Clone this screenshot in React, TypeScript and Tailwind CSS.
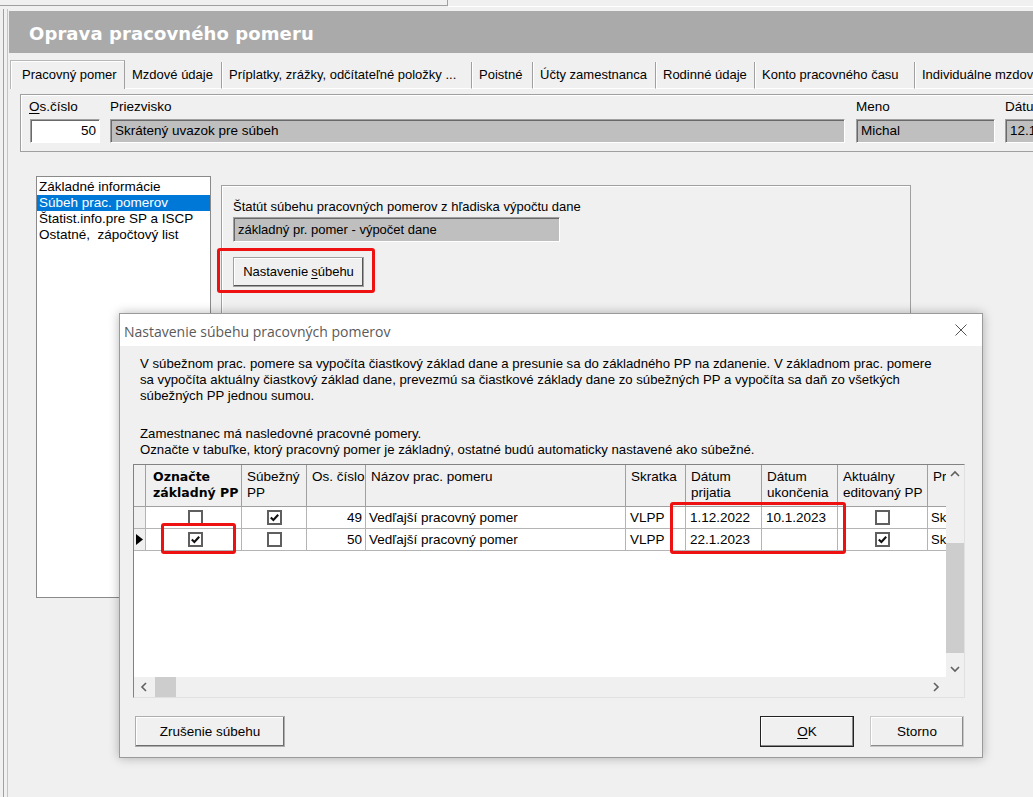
import React from "react";

const F = "font-['Liberation_Sans',Arial,sans-serif]";

function Chk({ on }: { on?: boolean }) {
  return (
    <span className="inline-flex w-[15px] h-[15px] border-2 border-[#5f5f5f] bg-white items-center justify-center">
      {on && (
        <svg width="11" height="11" viewBox="0 0 11 11">
          <path d="M1.8 5.4 L4.4 8 L9.2 2.8" stroke="#111" strokeWidth="2.1" fill="none" />
        </svg>
      )}
    </span>
  );
}

function Chev({ dir }: { dir: "up" | "down" | "left" | "right" }) {
  const d =
    dir === "up"
      ? "M1 6 L5 2 L9 6"
      : dir === "down"
      ? "M1 2 L5 6 L9 2"
      : dir === "left"
      ? "M6 1 L2 5 L6 9"
      : "M2 1 L6 5 L2 9";
  const w = dir === "up" || dir === "down" ? 10 : 8;
  const h = dir === "up" || dir === "down" ? 8 : 10;
  return (
    <svg width={w} height={h} viewBox={`0 0 ${w} ${h}`}>
      <path d={d} stroke="#606060" strokeWidth="1.6" fill="none" />
    </svg>
  );
}

const cols =
  "grid grid-cols-[12px_96px_65px_59px_260px_60px_76px_76px_90px_18px]";
const hc = "border-r border-b border-[#a0a0a0] pt-[4px] pl-[5px] leading-[16px] overflow-hidden whitespace-nowrap";
const dc = "border-r border-b border-[#b4b4b4] h-[22px] flex items-center overflow-hidden whitespace-nowrap bg-white";
const sunken =
  "border-t border-l border-[#a0a0a0] border-b border-r border-b-white border-r-white shadow-[inset_1px_1px_#696969]";

const tabs: [string, number][] = [
  ["Mzdové údaje", 97],
  ["Príplatky, zrážky, odčítateľné položky ...", 250],
  ["Poistné", 61],
  ["Účty zamestnanca", 123],
  ["Rodinné údaje", 99],
  ["Konto pracovného času", 160],
  ["Individuálne mzdové údaje", 200],
];

type Row = {
  ind: boolean;
  zak: boolean;
  sub: boolean;
  os: string;
  naz: string;
  sk: string;
  od: string;
  dokedy: string;
  akt: boolean;
};

const rows: Row[] = [
  { ind: false, zak: false, sub: true, os: "49", naz: "Vedľajší pracovný pomer", sk: "VLPP", od: "1.12.2022", dokedy: "10.1.2023", akt: false },
  { ind: true, zak: true, sub: false, os: "50", naz: "Vedľajší pracovný pomer", sk: "VLPP", od: "22.1.2023", dokedy: "", akt: true },
];

export default function App() {
  return (
    <div className={`relative w-[1033px] h-[797px] overflow-hidden bg-[#f0f0f0] text-black ${F}`}>
      {/* top strip */}
      <div className="flex h-[9px]">
        <div className="w-[448px] h-[6px] border-b border-r border-[#a0a0a0]" />
        <div className="flex-1 h-[7px] border-b border-white" />
      </div>

      <div className="flex h-[788px]">
        <div className="w-[3px] shrink-0" />
        <div className="w-[4px] shrink-0 border-l border-[#a0a0a0]" />
        <div className="w-[2px] shrink-0 border-l border-[#c4c4c4]" />
        <div className="flex-1 flex flex-col min-w-0 overflow-hidden">
          {/* title bar */}
          <div className="mt-[2px] h-[42px] bg-[#aaaaaa] flex items-center pl-[20px] pt-[2px] shrink-0">
            <span className="font-['DejaVu_Sans',Verdana,sans-serif] font-bold text-[18px] text-white tracking-[0.1px]">
              Oprava pracovného pomeru
            </span>
          </div>

          {/* tabs */}
          <div className="mt-[7px] h-[29px] flex items-end text-[13px] ml-[1px] overflow-hidden shrink-0">
            <div className="w-[115px] shrink-0 h-[29px] border-t border-l border-[#b8b8b8] shadow-[inset_1px_1px_#fff] border-r border-r-[#a0a0a0] pl-[11px] flex items-center whitespace-nowrap">
              Pracovný pomer
            </div>
            {tabs.map(([t, w]) => (
              <div
                key={t}
                style={{ width: w }}
                className="shrink-0 h-[27px] border-r border-[#a0a0a0] border-b border-b-white shadow-[1px_0_#fff] pl-[7px] flex items-center whitespace-nowrap overflow-hidden"
              >
                {t}
              </div>
            ))}
          </div>

          {/* header group */}
          <div className="mt-[5px] ml-[11px] w-[1100px] h-[58px] border border-[#a0a0a0] shadow-[inset_1px_1px_#fff] pl-[9px] pt-[4px] flex text-[13.5px] shrink-0">
            <div className="w-[70px] shrink-0">
              <div className="h-[16px] leading-[16px] -ml-[1px]">
                <span className="underline underline-offset-2">O</span>s.číslo
              </div>
              <div className={`mt-[4px] h-[24px] bg-white ${sunken} flex items-center justify-end pr-[3px]`}>
                50
              </div>
            </div>
            <div className="w-[735px] ml-[10px] shrink-0">
              <div className="h-[16px] leading-[16px]">Priezvisko</div>
              <div className={`mt-[4px] h-[24px] bg-[#bfbfbf] ${sunken} flex items-center pl-[4px]`}>
                Skrátený uvazok pre súbeh
              </div>
            </div>
            <div className="w-[139px] ml-[11px] shrink-0">
              <div className="h-[16px] leading-[16px]">Meno</div>
              <div className={`mt-[4px] h-[24px] bg-[#bfbfbf] ${sunken} flex items-center pl-[4px]`}>
                Michal
              </div>
            </div>
            <div className="w-[100px] ml-[10px] shrink-0">
              <div className="h-[16px] leading-[16px]">Dátum</div>
              <div className={`mt-[4px] h-[24px] bg-[#bfbfbf] ${sunken} flex items-center pl-[4px]`}>
                12.1.2023
              </div>
            </div>
          </div>

          {/* lower area */}
          <div className="mt-[24px] ml-[27px] flex items-start">
            <div className="w-[175px] shrink-0 h-[422px] bg-white border border-[#8a8a8a] text-[13.5px] leading-[16px] pt-[2px]">
              <div className="pl-[2px] h-[16px]">Základné informácie</div>
              <div className="pl-[2px] h-[16px] bg-[#0078d7] text-white">Súbeh prac. pomerov</div>
              <div className="pl-[2px] h-[16px]">Štatist.info.pre SP a ISCP</div>
              <div className="pl-[2px] h-[16px] whitespace-pre">Ostatné,  zápočtový list</div>
            </div>
            <div className="ml-[10px] mt-[9px] w-[690px] shrink-0 h-[415px] border border-[#a0a0a0] shadow-[inset_1px_1px_#fff] pl-[11px] pt-[13px] text-[13px]">
              <div className="h-[16px] leading-[16px]">
                Štatút súbehu pracovných pomerov z hľadiska výpočtu dane
              </div>
              <div className={`mt-[2px] w-[327px] h-[25px] bg-[#bfbfbf] ${sunken} flex items-center pl-[4px]`}>
                základný pr. pomer - výpočet dane
              </div>
              <button className="mt-[15px] w-[131px] h-[30px] bg-[#f0f0f0] border border-[#a0a0a0] shadow-[inset_-1px_-1px_#555,inset_1px_1px_#fff] text-[13px] flex items-center justify-center">
                Nastavenie <span className="underline underline-offset-2 ml-[3px]">s</span>úbehu
              </button>
            </div>
          </div>
        </div>
      </div>

      {/* dialog */}
      <div className="absolute left-[119px] top-[313px] w-[864px] h-[445px] bg-[#f0f0f0] border border-[#9a9a9a] shadow-[0_0_10px_rgba(0,0,0,0.28)] flex flex-col">
        <div className="h-[32px] bg-white flex items-center justify-between pl-[4px] pr-[15px]">
          <span className="font-['Open_Sans','Noto_Sans',sans-serif] text-[14px] text-[#5a5a5a] pt-[2px]">
            Nastavenie súbehu pracovných pomerov
          </span>
          <svg width="12" height="12" viewBox="0 0 12 12">
            <path d="M0.5 0.5 L11.5 11.5 M11.5 0.5 L0.5 11.5" stroke="#555" strokeWidth="1" />
          </svg>
        </div>
        <div className="pl-[13px] flex flex-col text-[13.2px] leading-[16px]">
          <div className="mt-[10px] pl-[7px] whitespace-nowrap">
            V súbežnom prac. pomere sa vypočíta čiastkový základ dane a presunie sa do základného PP na zdanenie. V základnom prac. pomere
            <br />
            sa vypočíta aktuálny čiastkový základ dane, prevezmú sa čiastkové základy dane zo súbežných PP a vypočíta sa daň zo všetkých
            <br />
            súbežných PP jednou sumou.
          </div>
          <div className="mt-[22px] pl-[7px] whitespace-nowrap">
            Zamestnanec má nasledovné pracovné pomery.
            <br />
            Označte v tabuľke, ktorý pracovný pomer je základný, ostatné budú automaticky nastavené ako súbežné.
          </div>

          {/* grid */}
          <div className="mt-[6px] w-[832px] h-[234px] border border-[#828282] border-b-[#e0e0e0] border-r-[#e0e0e0] flex flex-col text-[13.5px]">
            <div className="flex h-[212px]">
              <div className="w-[812px] bg-white flex flex-col">
                <div className={`${cols} h-[42px] bg-[#f0f0f0]`}>
                  <div className="border-r border-b border-[#a0a0a0]" />
                  <div className="border-r border-b border-[#a0a0a0] pl-[7px] pt-[4px] font-['DejaVu_Sans',Verdana,sans-serif] font-bold text-[12.5px] leading-[16px] whitespace-nowrap overflow-hidden">
                    Označte
                    <br />
                    základný PP
                  </div>
                  <div className={hc}>
                    Súbežný
                    <br />
                    PP
                  </div>
                  <div className={hc}>Os. číslo</div>
                  <div className={`${hc} pl-[4px]`}>Názov prac. pomeru</div>
                  <div className={hc}>Skratka</div>
                  <div className={hc}>
                    Dátum
                    <br />
                    prijatia
                  </div>
                  <div className={hc}>
                    Dátum
                    <br />
                    ukončenia
                  </div>
                  <div className={`${hc} pl-[4px]`}>
                    Aktuálny
                    <br />
                    editovaný PP
                  </div>
                  <div className={`${hc} pl-[3px] border-r-0`}>Pr</div>
                </div>
                {rows.map((r, i) => (
                  <div key={i} className={cols}>
                    <div className={`${dc} bg-[#f0f0f0]! justify-center`}>
                      {r.ind && (
                        <svg width="7" height="11" viewBox="0 0 7 11">
                          <path d="M0 0 L7 5.5 L0 11 Z" fill="#000" />
                        </svg>
                      )}
                    </div>
                    <div className={`${dc} justify-center pl-[3px]`}>
                      <Chk on={r.zak} />
                    </div>
                    <div className={`${dc} justify-center`}>
                      <Chk on={r.sub} />
                    </div>
                    <div className={`${dc} justify-end pr-[3px]`}>{r.os}</div>
                    <div className={`${dc} pl-[3px]`}>{r.naz}</div>
                    <div className={`${dc} pl-[4px]`}>{r.sk}</div>
                    <div className={`${dc} pl-[4px]`}>{r.od}</div>
                    <div className={`${dc} pl-[4px]`}>{r.dokedy}</div>
                    <div className={`${dc} justify-center`}>
                      <Chk on={r.akt} />
                    </div>
                    <div className={`${dc} pl-[3px] border-r-0 text-[13px]`}>Sk</div>
                  </div>
                ))}
              </div>
              <div className="w-[18px] bg-[#f0f0f0] flex flex-col">
                <div className="h-[17px] flex items-center justify-center">
                  <Chev dir="up" />
                </div>
                <div className="h-[61px]" />
                <div className="h-[110px] bg-[#cdcdcd]" />
                <div className="flex-1" />
                <div className="h-[17px] flex items-center justify-center">
                  <Chev dir="down" />
                </div>
              </div>
            </div>
            <div className="flex h-[20px] bg-[#f0f0f0]">
              <div className="w-[812px] flex">
                <div className="w-[20px] flex items-center justify-center">
                  <Chev dir="left" />
                </div>
                <div className="w-[21px] ml-[1px] bg-[#cdcdcd]" />
                <div className="flex-1" />
                <div className="w-[20px] flex items-center justify-center">
                  <Chev dir="right" />
                </div>
              </div>
              <div className="w-[18px]" />
            </div>
          </div>

          {/* buttons */}
          <div className="mt-[18px] flex items-center pl-[2px] pr-[18px] text-[13.5px]">
            <button className="w-[150px] h-[31px] bg-[#f0f0f0] border border-[#adadad] shadow-[inset_-1px_-1px_#6d6d6d,inset_1px_1px_#fff]">
              Zrušenie súbehu
            </button>
            <div className="flex-1" />
            <button className="w-[94px] h-[31px] bg-[#f0f0f0] border border-[#222] shadow-[inset_-1px_-1px_#8a8a8a,inset_1px_1px_#fff]">
              <span className="underline underline-offset-2">O</span>K
            </button>
            <button className="ml-[16px] w-[94px] h-[31px] bg-[#f0f0f0] border border-[#c8c8c8] shadow-[inset_-1px_-1px_#8a8a8a,inset_1px_1px_#fff]">
              Storno
            </button>
          </div>
        </div>
      </div>

      {/* red annotation boxes */}
      <div className="absolute left-[217px] top-[248px] w-[158px] h-[45px] border-[3px] border-[#ee1111] rounded-[3px]" />
      <div className="absolute left-[161px] top-[523px] w-[75px] h-[31px] border-[3px] border-[#ee1111] rounded-[3px]" />
      <div className="absolute left-[670px] top-[502px] w-[176px] h-[52px] border-[3px] border-[#ee1111] rounded-[3px]" />
    </div>
  );
}
